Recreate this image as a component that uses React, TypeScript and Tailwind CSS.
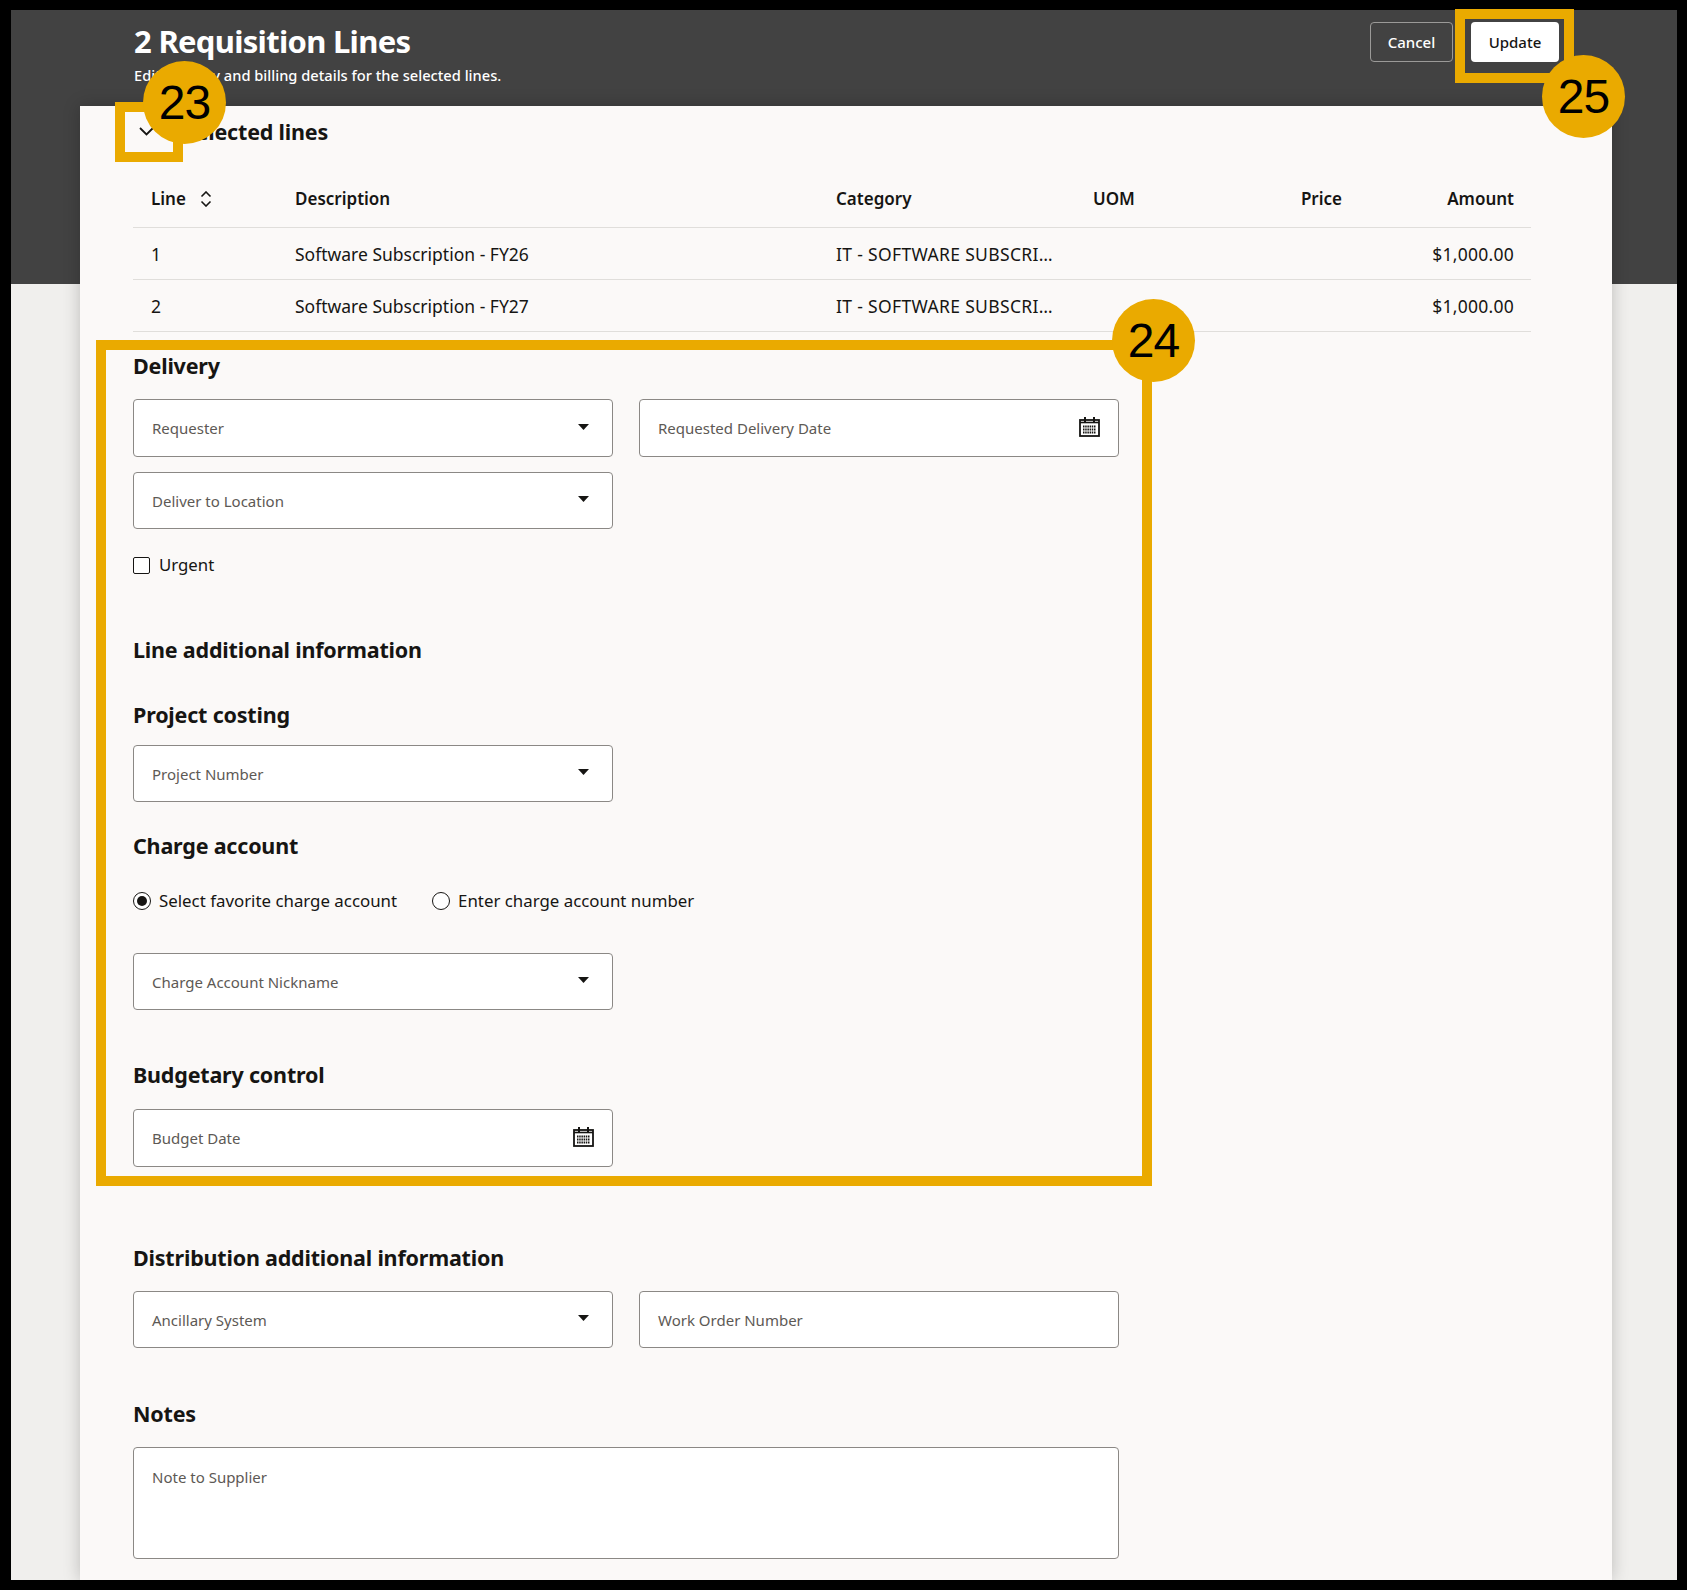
import { ReactNode } from 'react';

const font = "font-['Noto_Sans',sans-serif]";

function Caret() {
    return (
        <svg width="11" height="6" viewBox="0 0 11 6" className="shrink-0 -mt-[3px]">
            <path d="M0 0h11L5.5 6z" fill="#161513" />
        </svg>
    );
}

function CalendarIcon() {
    return (
        <svg width="21" height="20" viewBox="0 0 21 20" fill="none" className="shrink-0 -mt-[2px]">
            <rect x="1" y="3" width="19" height="16" stroke="#161513" strokeWidth="1.8" />
            <path d="M6 0v5M15 0v5" stroke="#161513" strokeWidth="2" />
            <path d="M1 5.5h19" stroke="#161513" strokeWidth="1.6" />
            <path d="M4 9.5h13M4 12.5h13M4 15.5h13" stroke="#161513" strokeWidth="1.8" strokeDasharray="1.5 0.7" />
        </svg>
    );
}

function Field({ label, icon, className = 'h-[58px]' }: { label: string; icon?: 'caret' | 'calendar'; className?: string }) {
    return (
        <div className={`w-[480px] ${className} bg-white border border-[#8b8885] rounded-[4px] flex items-center justify-between pl-[18px] ${icon === 'caret' ? 'pr-[23px]' : 'pr-[18px]'}`}>
            <span className="text-[15px] leading-none text-[#5d5955] pt-[1px]">{label}</span>
            {icon === 'caret' && <Caret />}
            {icon === 'calendar' && <CalendarIcon />}
        </div>
    );
}

function Heading({ children, className = '' }: { children: ReactNode; className?: string }) {
    return <h2 className={`text-[21.5px] leading-[30px] font-bold tracking-[-0.2px] text-[#161513] ${className}`}>{children}</h2>;
}

function Badge({ n, className }: { n: number; className: string }) {
    return (
        <div className={`absolute w-[83px] h-[83px] rounded-full bg-[#eaaa00] flex items-center justify-center text-[48px] leading-none tracking-[-1px] text-black font-['Liberation_Sans',sans-serif] ${className}`}>
            {n}
        </div>
    );
}

const rows = [
    { line: 1, desc: 'Software Subscription - FY26' },
    { line: 2, desc: 'Software Subscription - FY27' },
];

const cols = 'grid grid-cols-[145px_540px_257px_142px_142px_172px]';

export default function App() {
    return (
        <div className={`relative h-[1590px] bg-black pt-[10px] pr-[10px] pb-[10px] pl-[11px] overflow-hidden ${font}`}>
            <div className="h-[1570px] overflow-hidden bg-[linear-gradient(#424242_274px,#f0efed_274px)]">
                {/* title bar */}
                <div className="relative z-10 h-[96px] flex justify-between pl-[123px] pr-[118px]">
                    <div className="text-white">
                        <h1 className="text-[31px] leading-[40px] font-bold pt-[11px] tracking-[-0.7px]">2 Requisition Lines</h1>
                        <p className="text-[14.65px] leading-[20px] font-medium pt-[4px]">Edit delivery and billing details for the selected lines.</p>
                    </div>
                    <div className="flex gap-[18px] pt-[12px]">
                        <button className="w-[83px] h-[40px] rounded-[4px] border border-[#9b9a98] text-white text-[15px] font-medium">Cancel</button>
                        <button className="w-[88px] h-[40px] rounded-[4px] bg-white text-[#161513] text-[15px] font-medium">Update</button>
                    </div>
                </div>

                {/* card */}
                <div className="ml-[69px] w-[1532px] h-[1474px] bg-[#fbf9f8] shadow-[0_0_16px_rgba(0,0,0,0.22)] pl-[53px] pr-[81px] text-[#161513]">
                    <div className="h-[52px] flex items-center gap-[30px] pl-[6px] pb-[1px]">
                        <svg width="15" height="9" viewBox="0 0 15 9" fill="none">
                            <path d="M1 1l6.5 6.5L14 1" stroke="#161513" strokeWidth="1.8" />
                        </svg>
                        <Heading>Selected lines</Heading>
                    </div>

                    <div className={`${cols} h-[70px] items-center pt-[13px] border-b border-[#e0dedb] text-[17px] font-semibold`}>
                        <div className="pl-[18px] flex items-center gap-[14px]">
                            Line
                            <svg width="12" height="16" viewBox="0 0 12 16" fill="none">
                                <path d="M1.5 5.5L6 1l4.5 4.5M1.5 10.5L6 15l4.5-4.5" stroke="#161513" strokeWidth="1.6" />
                            </svg>
                        </div>
                        <div className="pl-[17px]">Description</div>
                        <div className="pl-[18px]">Category</div>
                        <div className="pl-[18px]">UOM</div>
                        <div className="pr-[17px] text-right">Price</div>
                        <div className="pr-[17px] text-right">Amount</div>
                    </div>
                    {rows.map((r) => (
                        <div key={r.line} className={`${cols} h-[52px] items-center pt-[1px] border-b border-[#e0dedb] text-[17.5px]`}>
                            <div className="pl-[18px]">{r.line}</div>
                            <div className="pl-[17px]">{r.desc}</div>
                            <div className="pl-[18px] tracking-[0.34px]">IT - SOFTWARE SUBSCRI…</div>
                            <div />
                            <div />
                            <div className="pr-[17px] text-right tracking-[0.25px]">$1,000.00</div>
                        </div>
                    ))}

                    <Heading className="mt-[19px]">Delivery</Heading>
                    <div className="flex gap-[26px] mt-[18px]">
                        <Field label="Requester" icon="caret" />
                        <Field label="Requested Delivery Date" icon="calendar" />
                    </div>
                    <div className="mt-[15px]">
                        <Field label="Deliver to Location" icon="caret" className="h-[57px]" />
                    </div>
                    <label className="flex items-center gap-[9px] mt-[23px] text-[16.8px] leading-[26px]">
                        <span className="w-[17px] h-[17px] border-[1.5px] border-[#161513] rounded-[2px] bg-white" />
                        Urgent
                    </label>

                    <Heading className="mt-[57px]">Line additional information</Heading>
                    <Heading className="mt-[35px]">Project costing</Heading>
                    <div className="mt-[15px]"><Field label="Project Number" icon="caret" className="h-[57px]" /></div>

                    <Heading className="mt-[29px]">Charge account</Heading>
                    <div className="flex items-center mt-[27px] text-[16.85px] leading-[26px]">
                        <span className="w-[18px] h-[18px] rounded-full border-[1.5px] border-[#161513] bg-white flex items-center justify-center mr-[8px]">
                            <span className="w-[10px] h-[10px] rounded-full bg-[#161513]" />
                        </span>
                        <span>Select favorite charge account</span>
                        <span className="w-[18px] h-[18px] rounded-full border-[1.5px] border-[#161513] bg-white ml-[35px] mr-[8px]" />
                        <span>Enter charge account number</span>
                    </div>
                    <div className="mt-[39px]"><Field label="Charge Account Nickname" icon="caret" className="h-[57px]" /></div>

                    <Heading className="mt-[50px]">Budgetary control</Heading>
                    <div className="mt-[19px]"><Field label="Budget Date" icon="calendar" /></div>

                    <Heading className="mt-[76px]">Distribution additional information</Heading>
                    <div className="flex gap-[26px] mt-[18px]">
                        <Field label="Ancillary System" icon="caret" className="h-[57px]" />
                        <Field label="Work Order Number" className="h-[57px]" />
                    </div>

                    <Heading className="mt-[51px]">Notes</Heading>
                    <div className="w-[986px] h-[112px] mt-[18px] bg-white border border-[#8b8885] rounded-[4px] pl-[18px] pt-[22px]">
                        <span className="block text-[15px] leading-none text-[#5d5955]">Note to Supplier</span>
                    </div>
                </div>
            </div>

            {/* callouts */}
            <div className="absolute z-20 left-[115px] top-[102px] w-[68px] h-[60px] border-[10px] border-[#eaaa00]" />
            <div className="absolute z-20 left-[96px] top-[340px] w-[1056px] h-[846px] border-[10px] border-[#eaaa00]" />
            <div className="absolute z-20 left-[1455px] top-[9px] w-[119px] h-[74px] border-[10px] border-[#eaaa00]" />
            <Badge n={23} className="z-30 left-[143px] top-[61px]" />
            <Badge n={24} className="z-30 left-[1112px] top-[299px]" />
            <Badge n={25} className="z-30 left-[1542px] top-[55px]" />
        </div>
    );
}
